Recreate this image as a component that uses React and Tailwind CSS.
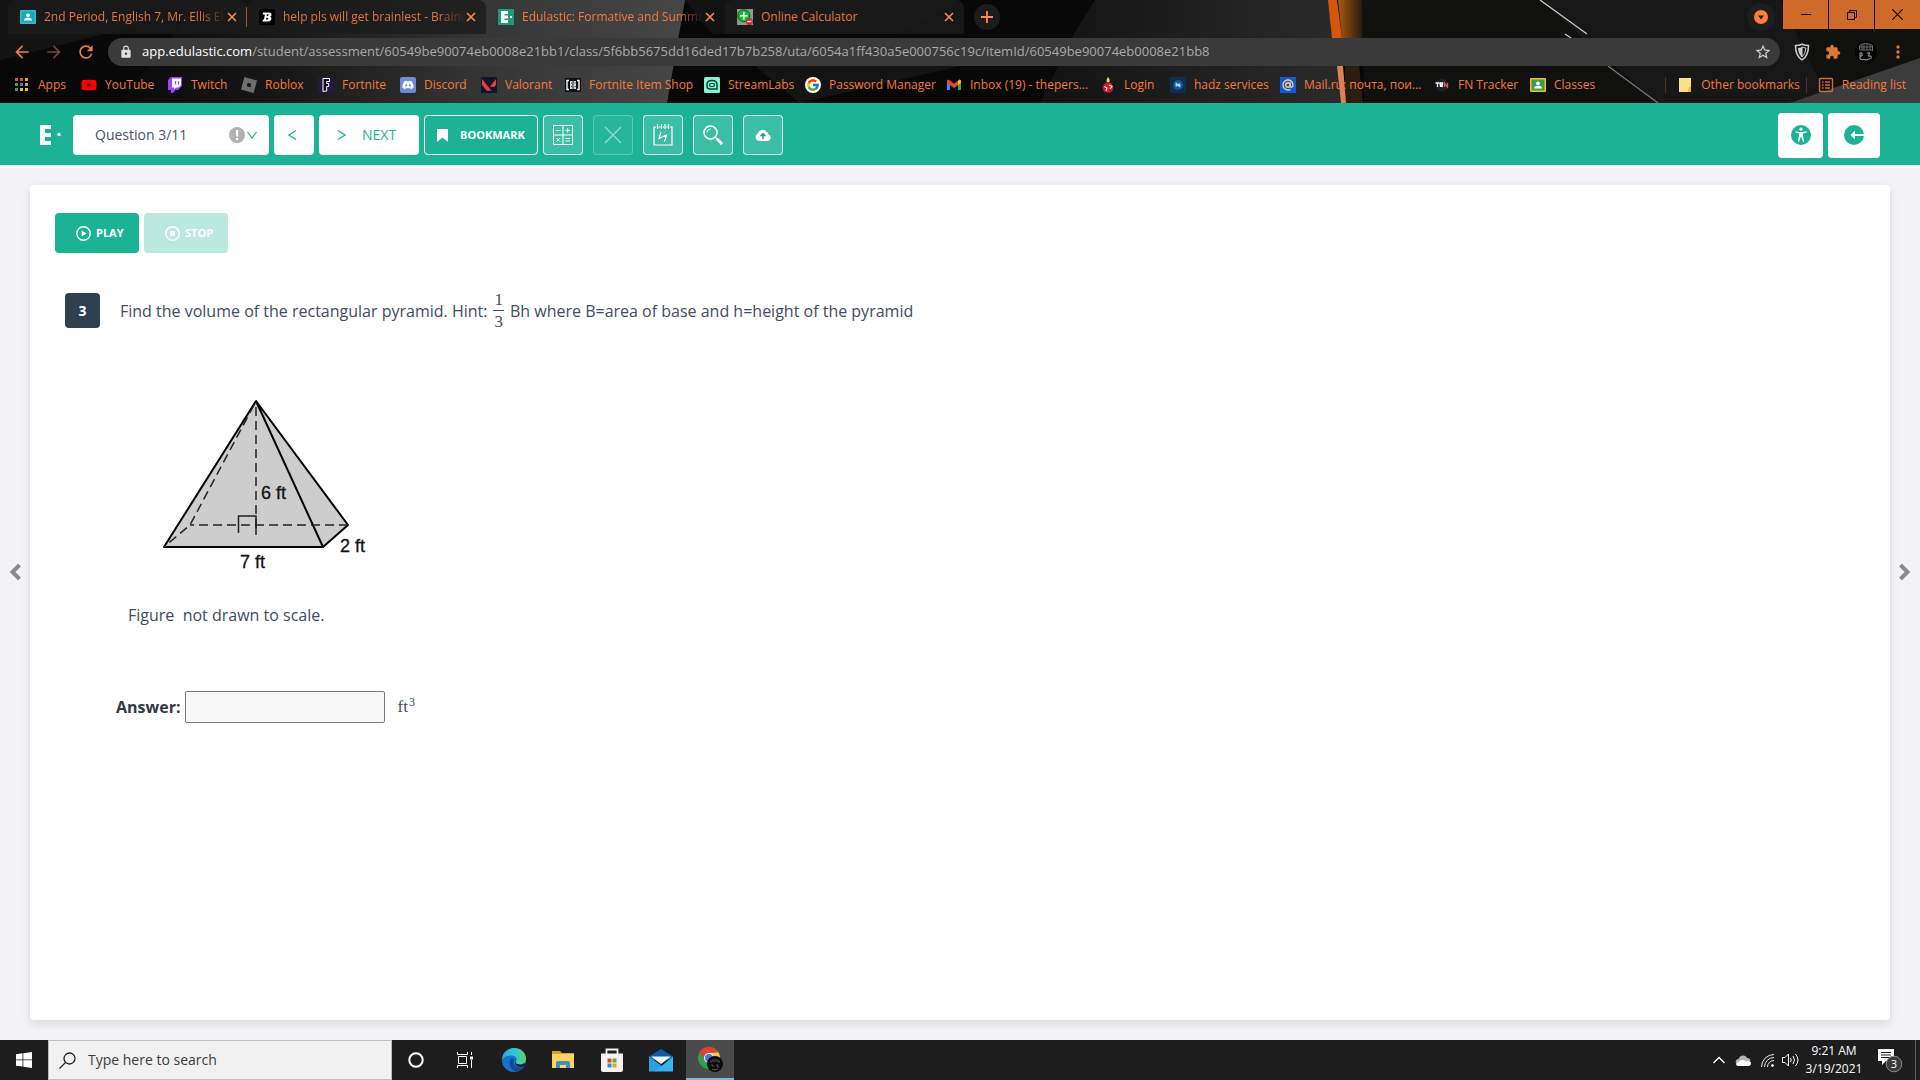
import React from "react";
import { SiValorant, SiRoblox } from "react-icons/si";
import { FaYoutube, FaDiscord } from "react-icons/fa";
import { FcGoogle } from "react-icons/fc";
import { MdLock, MdExtension, MdArrowBack, MdArrowForward, MdRefresh, MdStarBorder, MdMoreVert } from "react-icons/md";

/* ---------- favicons ---------- */

const Sq = ({ children, ...p }) => (
  <svg viewBox="0 0 16 16" className="h-4 w-4 shrink-0" aria-hidden="true" {...p}>
    {children}
  </svg>
);

const ClassroomIcon = ({ bg, frame }) => (
  <Sq>
    <rect y="1" width="16" height="14" rx="1" fill={frame} />
    <rect x="1.5" y="2.5" width="13" height="11" fill={bg} />
    <circle cx="8" cy="6.3" r="1.9" fill="#fff" />
    <path d="M4 11.5c0-2 2-3 4-3s4 1 4 3z" fill="#fff" />
  </Sq>
);

const BrainlyIcon = () => (
  <Sq>
    <rect width="16" height="16" rx="2" fill="#000" />
    <path d="M4 3.500h5.500c2 0 3 .8 3 2.200 0 1-.6 1.700-1.500 2 1 .3 1.600 1 1.400 2-.3 1.800-1.500 2.800-3.800 2.800H3.500l.4-2H5l.8-5H3.700zM8 5.300l-.3 1.600h1c1.300 0 1.400-1.600.3-1.600zM7.300 8.700 7 10.600h1.200c1.400 0 1.500-1.900.2-1.900z" fill="#fff" fillRule="evenodd" />
  </Sq>
);

const EdulasticIcon = () => (
  <Sq>
    <rect width="16" height="16" fill="#1f9a78" />
    <path d="M3 2h7v3H6.500v1.500H10v3H6.500V11H10v3H3z" fill="#fff" />
    <rect x="12" y="7" width="2" height="2" fill="#fff" />
  </Sq>
);

const CalculatorSiteIcon = () => (
  <Sq>
    <rect width="16" height="16" fill="#8f9690" />
    <circle cx="6.800" cy="6.800" r="6" fill="#11c02c" stroke="#0a5e18" strokeWidth="1" />
    <path d="M6.800 3v7.600M3 6.800h7.600" stroke="#fff" strokeWidth="1.500" />
    <circle cx="12.300" cy="12.500" r="3.500" fill="#d3202e" />
    <path d="M10.200 12.500h4.200" stroke="#fff" strokeWidth="1.500" />
  </Sq>
);

const APP_DOTS = ["#e0503f", "#e0503f", "#e0a13f", "#3f9d58", "#4384d8", "#e0a13f", "#3f9d58", "#e8b93a", "#e8b93a"];
const AppsIcon = () => (
  <Sq>
    {APP_DOTS.map((c, i) => (
      <rect key={i} x={1 + (i % 3) * 5} y={1 + Math.floor(i / 3) * 5} width="3" height="3" fill={c} />
    ))}
  </Sq>
);

const YoutubeMark = () => <FaYoutube className="h-4 w-4 shrink-0 text-[#f00]" />;
const TwitchMark = () => (
  <Sq>
    <path d="M4 0h11v9l-4 4H8.500L6 16H4v-3H1V3z" fill="#9147ff" />
    <path d="M5 1.500h9V8l-2.500 2.500H9L7 12.300v-1.800H5z" fill="#fff" />
    <path d="M8.500 4v3.500M11.500 4v3.500" stroke="#9147ff" strokeWidth="1.300" />
  </Sq>
);
const RobloxMark = () => <SiRoblox className="h-4 w-4 shrink-0 text-[#6e6e6e]" />;
const FortniteMark = () => (
  <Sq>
    <rect width="16" height="16" fill="#241a3f" />
    <path d="M5 1.500h6.500v3H8.700V6.500h2v3h-2V14L5 14.500z" fill="#15102a" stroke="#fff" strokeWidth="1" />
  </Sq>
);
const DiscordMark = () => (
  <span className="flex h-4 w-4 shrink-0 items-center justify-center rounded-xs bg-[#7289da]">
    <FaDiscord className="h-3 w-3 text-white" />
  </span>
);
const ValorantMark = () => (
  <span className="flex h-4 w-4 shrink-0 items-center justify-center bg-[#101823]">
    <SiValorant className="h-[14px] w-[14px] text-[#f0384a]" />
  </span>
);
const ItemShopMark = () => (
  <Sq>
    <rect y="1" width="16" height="14" fill="#0d1119" />
    <path d="M4 3.500H2v9h2M12 3.500h2v9h-2" fill="none" stroke="#fff" strokeWidth="1.400" />
    <rect x="5" y="4" width="6" height="8" fill="#d9d9d9" />
    <path d="M8 4v8M6 6h1M9.500 6h1M6 9.500h1M9.500 9.500h1" stroke="#222" strokeWidth="1" />
  </Sq>
);
const StreamlabsMark = () => (
  <Sq>
    <rect width="16" height="16" rx="1.500" fill="#80f5d2" />
    <path d="M3 9V7.500C3 5 5 3.500 8 3.500s5 1.500 5 4.200V12H6c-2 0-3-1-3-3z" fill="none" stroke="#17403a" strokeWidth="1.500" />
    <rect x="5.500" y="6.500" width="5" height="3" rx="1.500" fill="none" stroke="#17403a" strokeWidth="1.200" />
  </Sq>
);
const GoogleMark = () => (
  <span className="flex h-4 w-4 shrink-0 items-center justify-center rounded-full bg-white">
    <FcGoogle className="h-[14px] w-[14px]" />
  </span>
);
const GmailMark = () => (
  <Sq>
    <path d="M1 3.500V13h3V6z" fill="#4285f4" />
    <path d="M15 3.500V13h-3V6z" fill="#34a853" />
    <path d="M1 3.500 2.500 2.600 8 6.800l5.500-4.200 1.500.9V6L8 11 1 6z" fill="#ea4335" />
    <path d="M12 4l1.500-1.400L15 3.500V6l-3 2z" fill="#fbbc04" />
  </Sq>
);
const LoginMark = () => (
  <Sq>
    <path d="M8 0c2.500 3 2 5 0 6-2-1-2-3 0-6z" fill="#f2d36a" />
    <circle cx="8" cy="10.500" r="5.300" fill="#c9172b" />
    <path d="M4.500 9.500 7 11l-1 3M9 8l3 1.500-2 2.500" stroke="#fff" strokeWidth="1.100" fill="none" />
  </Sq>
);
const HadzMark = () => (
  <Sq>
    <rect width="16" height="16" fill="#0b2e52" />
    <circle cx="8" cy="8" r="5" fill="#12559a" />
    <path d="M6.500 9.500V7l3 2V6.500" stroke="#9fe0ff" strokeWidth="1.800" fill="none" />
  </Sq>
);
const MailRuMark = () => (
  <Sq>
    <rect width="16" height="16" fill="#1258d8" />
    <circle cx="8" cy="8" r="2.300" fill="none" stroke="#f3c77f" strokeWidth="1.400" />
    <path d="M10.300 5.500V9c0 2 2.700 1.500 2.700-1A5 5 0 1 0 10.500 12.300" fill="none" stroke="#f3c77f" strokeWidth="1.400" />
  </Sq>
);
const TrackerMark = () => (
  <Sq>
    <circle cx="8" cy="8" r="6.500" fill="#1b2029" />
    <path d="M1.500 6h4M3.500 6v4M6.500 10V6h2v2h-2l2 2" stroke="#fff" strokeWidth="1.300" fill="none" />
    <path d="M10.500 10V6l3 4V6" stroke="#e0584f" strokeWidth="1.300" fill="none" />
  </Sq>
);
const FolderMark = () => (
  <Sq>
    <path d="M2 1h12v10l-1 4H2z" fill="#fbe08b" />
    <path d="M12 10h2v5h-3z" fill="#e9b44c" />
  </Sq>
);
const ReadingListMark = () => (
  <Sq fill="none" stroke="#cf6a35" strokeWidth="1.400">
    <rect x="1.500" y="1.500" width="13" height="13" rx="1" />
    <path d="M4 5h1.500M7 5h5M4 8h1.500M7 8h5M4 11h1.500M7 11h5" />
  </Sq>
);

/* ---------- browser chrome ---------- */

const TABS = [
  { title: "2nd Period, English 7, Mr. Ellis Ell", icon: <ClassroomIcon bg="#1aa7b8" frame="#31bccd" />, fade: true },
  { title: "help pls will get brainlest - Brainl", icon: <BrainlyIcon />, fade: true },
  { title: "Edulastic: Formative and Summa", icon: <EdulasticIcon />, active: true, fade: true },
  { title: "Online Calculator", icon: <CalculatorSiteIcon /> },
];

const BOOKMARKS = [
  { label: "Apps", icon: <AppsIcon />, w: "w-[67px]" },
  { label: "YouTube", icon: <YoutubeMark />, w: "w-[86px]" },
  { label: "Twitch", icon: <TwitchMark />, w: "w-[74px]" },
  { label: "Roblox", icon: <RobloxMark />, w: "w-[77px]" },
  { label: "Fortnite", icon: <FortniteMark />, w: "w-[82px]" },
  { label: "Discord", icon: <DiscordMark />, w: "w-[81px]" },
  { label: "Valorant", icon: <ValorantMark />, w: "w-[84px]" },
  { label: "Fortnite Item Shop", icon: <ItemShopMark />, w: "w-[139px]" },
  { label: "StreamLabs", icon: <StreamlabsMark />, w: "w-[101px]" },
  { label: "Password Manager", icon: <GoogleMark />, w: "w-[141px]" },
  { label: "Inbox (19) - thepers...", icon: <GmailMark />, w: "w-[154px]" },
  { label: "Login", icon: <LoginMark />, w: "w-[70px]" },
  { label: "hadz services", icon: <HadzMark />, w: "w-[110px]" },
  { label: "Mail.ru: почта, пои...", icon: <MailRuMark />, w: "w-[154px]" },
  { label: "FN Tracker", icon: <TrackerMark />, w: "w-[96px]" },
  { label: "Classes", icon: <ClassroomIcon bg="#3f9a52" frame="#f4bc2c" />, w: "w-[66px]" },
];

function ThemeArt() {
  return (
    <svg className="absolute inset-0 h-full w-full" viewBox="0 0 1920 103" preserveAspectRatio="none" aria-hidden="true">
      <defs>
        <linearGradient id="slab" x1="0" x2="1">
          <stop offset="0" stopColor="#0a0a0a" />
          <stop offset="0.3" stopColor="#181818" />
          <stop offset="0.65" stopColor="#363636" />
          <stop offset="1" stopColor="#464646" />
        </linearGradient>
        <linearGradient id="panel" x1="0" x2="1">
          <stop offset="0" stopColor="#121212" />
          <stop offset="1" stopColor="#2b2b2b" />
        </linearGradient>
        <linearGradient id="glow" x1="0" x2="1">
          <stop offset="0" stopColor="#a65b12" />
          <stop offset="1" stopColor="#12110e" />
        </linearGradient>
      </defs>
      <rect width="1920" height="103" fill="#080808" />
      <path d="M200 0H685L667 103H120z" fill="url(#slab)" />
      <path d="M0 60 240 0H0z" fill="#1a1a1a" opacity=".6" />
      <path d="M685 0H960L900 34H712z" fill="#121212" />
      <path d="M755 66H960L800 103z" fill="#141414" />
      <path d="M1095 0H1330L1345 103H1040L1074 34z" fill="url(#panel)" />
      <path d="M1338 0h24L1366 38h-24z" fill="url(#glow)" />
      <path d="M1345 66h14l4 37h-18z" fill="#2b1d10" />
      <path d="M1362 0H1920V103H1364z" fill="#10100f" />
      <path d="M1540 0H1780L1830 103H1657z" fill="#171717" />
      <path d="M1328 0h9l5 38h-10z" fill="#d4570c" />
      <path d="M1337 66h6l3 37h-5z" fill="#dc8158" />
      <path d="M1540 0 1587 34M1565 34l6 4" stroke="#c9c9c9" strokeWidth="1.300" />
      <path d="M1608 66 1658 103" stroke="#777" strokeWidth="1.300" />
      <path d="M1920 58 1790 103h130z" fill="#3c3c3c" />
    </svg>
  );
}

const CloseX = ({ className }) => (
  <svg viewBox="0 0 10 10" className={className} fill="none" stroke="currentColor" strokeWidth="1.600" aria-hidden="true">
    <path d="M1 1l8 8M9 1 1 9" />
  </svg>
);

function Browser() {
  return (
    <header className="relative bg-[#0a0a0a] text-xs text-[#f57a3d] select-none">
      <ThemeArt />
      <div className="relative flex h-[38px] items-start">
        <nav className="flex h-[34px] items-center pl-2" aria-label="Tabs">
          {TABS.map((t, i) => (
            <div
              key={t.title}
              className={
                "flex h-[34px] w-[239px] items-center rounded-t-lg pl-3 " +
                (t.active ? "text-[#f57a3d]" : "bg-[#1c1c1c]/80 text-[#e27540]")
              }
            >
              {t.icon}
              <span
                className={
                  "ml-2 w-[180px] shrink-0 whitespace-nowrap " +
                  (t.fade ? "[mask-image:linear-gradient(to_right,black_155px,transparent_182px)]" : "")
                }
              >
                {t.title}
              </span>
              <button className="flex h-4 w-4 shrink-0 items-center justify-center text-[#ff8a4c]" aria-label="Close tab">
                <CloseX className="h-[10px] w-[10px]" />
              </button>
              {i === 0 && <span className="ml-1.5 h-5 w-px shrink-0 bg-[#9a5530]" />}
            </div>
          ))}
        </nav>
        <button className="mt-1 ml-[10px] flex h-[26px] w-[26px] items-center justify-center rounded-full bg-[#1c1c1c] text-[#ff8a4c]" aria-label="New tab">
          <svg viewBox="0 0 12 12" className="h-3 w-3" stroke="currentColor" strokeWidth="1.800"><path d="M6 0v12M0 6h12" /></svg>
        </button>
        <div className="ml-auto flex items-start">
          <button className="mt-[3px] mr-2 flex h-7 w-7 items-center justify-center rounded-full bg-[#1e1e1e]" aria-label="Search tabs">
            <svg viewBox="0 0 14 14" className="h-[14px] w-[14px]"><circle cx="7" cy="7" r="7" fill="#ff7b3a" /><path d="M4 5.500h6L7 9.500z" fill="#1a1a1a" /></svg>
          </button>
          <div className="flex gap-px text-black">
            <button className="flex h-[29px] w-[45px] items-center justify-center bg-[#cf6a2b]" aria-label="Minimize">
              <svg viewBox="0 0 10 10" className="h-[10px] w-[10px]" stroke="currentColor"><path d="M0 4.500h10" /></svg>
            </button>
            <button className="flex h-[29px] w-[45px] items-center justify-center bg-[#cf6a2b]" aria-label="Restore">
              <svg viewBox="0 0 10 10" className="h-[10px] w-[10px]" fill="none" stroke="currentColor"><path d="M.5 2.500h7v7h-7zM2.500 2.500v-2h7v7h-2" /></svg>
            </button>
            <button className="flex h-[29px] w-[45px] items-center justify-center bg-[#cf6a2b]" aria-label="Close">
              <svg viewBox="0 0 10 10" className="h-[11px] w-[11px]" stroke="currentColor"><path d="M0 0l10 10M10 0 0 10" /></svg>
            </button>
          </div>
        </div>
      </div>

      <div className="relative flex h-7 items-center">
        <div className="flex w-[108px] shrink-0 items-center gap-3 pl-3 text-[#e98045]">
          <button aria-label="Back"><MdArrowBack className="h-5 w-5" /></button>
          <button aria-label="Forward" className="text-[#7d4529]"><MdArrowForward className="h-5 w-5" /></button>
          <button aria-label="Reload"><MdRefresh className="h-5 w-5" /></button>
        </div>
        <div className="flex h-7 min-w-0 flex-1 items-center rounded-full bg-[#3a3a3a] pr-2 pl-[11px]">
          <MdLock className="h-[14px] w-[14px] shrink-0 text-[#e0e0e0]" />
          <p className="ml-[9px] flex-1 truncate text-[13px] text-[#a9a9a9]">
            <span className="text-white">app.edulastic.com</span>
            /student/assessment/60549be90074eb0008e21bb1/class/5f6bb5675dd16ded17b7b258/uta/6054a1ff430a5e000756c19c/itemId/60549be90074eb0008e21bb8
          </p>
          <button aria-label="Bookmark this page" className="text-[#d0d0d0]"><MdStarBorder className="h-[18px] w-[18px]" /></button>
        </div>
        <div className="flex w-[140px] shrink-0 items-center">
          <button aria-label="Shield extension" className="ml-3.5">
            <svg viewBox="0 0 16 18" className="h-[18px] w-4" fill="none" stroke="#cfcfcf"><path d="M1.500 2.500Q5 2.500 8 1.200q3 1.300 6.500 1.300Q14.500 13 8 16.800 1.500 13 1.500 2.500z" strokeWidth="1.500" /><path d="M8 4q2 1 4 1-.5 6.500-4 9z" strokeWidth="1" /><path d="M8 4q-2 1-4 1 .5 6.500 4 9z" fill="#cfcfcf" stroke="none" /></svg>
          </button>
          <button aria-label="Extensions" className="ml-[15px] text-[#de7636]"><MdExtension className="h-4 w-4" /></button>
          <button aria-label="Profile" className="ml-[14px]">
            <svg viewBox="0 0 22 22" className="h-[22px] w-[22px]"><circle cx="11" cy="11" r="11" fill="#050505" /><path d="M4.500 9V4.500q6-4 13 0V10M7 3v6M9 2.500V9M12 2.500V9M15 3v6M5 9h13M5 6h12" stroke="#6a6a6a" fill="none" /><path d="M5 12h2v3H5zM12 12h3l-2 3h3v3M8 18.500l3 .5 4-1.500M5 15v3l3 1" stroke="#a5a5a5" fill="none" /></svg>
          </button>
          <button aria-label="Menu" className="ml-[11px] text-[#de7636]"><MdMoreVert className="h-5 w-5" /></button>
        </div>
      </div>

      <div className="relative flex h-[37px] items-center pr-[14px] pl-[14px]">
        <ul className="flex min-w-0 flex-1 overflow-hidden">
          {BOOKMARKS.map((b) => (
            <li key={b.label} className={"shrink-0 " + b.w}>
              <a href="#" className="flex items-center gap-2 whitespace-nowrap">
                {b.icon}
                {b.label}
              </a>
            </li>
          ))}
        </ul>
        <a href="#" className="flex items-center gap-2 border-l border-[#4a3226] pr-1.5 pl-[11px] whitespace-nowrap"><FolderMark />Other bookmarks</a>
        <a href="#" className="flex items-center gap-2 border-l border-[#4a3226] pl-[11px] whitespace-nowrap"><ReadingListMark />Reading list</a>
      </div>
    </header>
  );
}

/* ---------- assessment toolbar ---------- */

const Chevron = ({ dir, className }) => (
  <svg viewBox="0 0 10 12" className={className} fill="none" stroke="currentColor" strokeWidth="1.400" aria-hidden="true">
    <path d={dir === "left" ? "M9 1 1 6l8 5" : "M1 1l8 5-8 5"} />
  </svg>
);

const toolBtn = "flex h-10 w-10 items-center justify-center rounded border border-white/80 bg-white/15 text-white";

function Toolbar() {
  return (
    <div className="flex h-[62px] shrink-0 items-center bg-[#1bb394] pt-0.5 pr-10 pl-10 text-[#1bb394]">
      <svg viewBox="0 0 21 20" className="mr-3 h-5 w-[21px] shrink-0" fill="#fff" role="img" aria-label="Edulastic">
        <path d="M0 0h11v4H5v4h6v4H5v4h6v4H0z" /><circle cx="19" cy="9.500" r="1.700" />
      </svg>
      <div className="relative w-[196px]">
        <select aria-label="Question" className="h-10 w-full appearance-none rounded bg-white pl-[22px] text-sm font-medium text-[#4b5262]">
          <option>Question 3/11</option>
        </select>
        <span className="pointer-events-none absolute inset-y-0 right-3 flex items-center gap-0.5">
          <svg viewBox="0 0 16 16" className="h-4 w-4"><circle cx="8" cy="8" r="8" fill="#b1b1b1" /><path d="M7 3h2.200L9 9.500H7.200z" fill="#fff" /><circle cx="8.100" cy="12" r="1.200" fill="#fff" /></svg>
          <svg viewBox="0 0 10 8" className="h-2 w-[10px]" fill="none" stroke="#1bb394" strokeWidth="1.200"><path d="M.5 1 5 7l4.500-6" /></svg>
        </span>
      </div>
      <button aria-label="Previous" className="ml-[5px] flex h-10 w-10 items-center justify-center rounded bg-white pr-1"><Chevron dir="left" className="h-3 w-[9px]" /></button>
      <button className="ml-[5px] flex h-10 w-[100px] items-center gap-4 rounded bg-white pl-[18px] text-sm"><Chevron dir="right" className="h-3 w-[9px]" />NEXT</button>
      <button className="ml-[5px] flex h-10 w-[114px] items-center gap-3 rounded border border-white pl-3 text-[11px] font-bold text-white">
        <svg viewBox="0 0 11 13" className="h-[13px] w-[11px]" fill="#fff"><path d="M0 0h11v13L5.500 8.500 0 13z" /></svg>
        BOOKMARK
      </button>
      <div className="ml-[5px] flex gap-2.5">
        <button className={toolBtn} aria-label="Calculator">
          <svg viewBox="0 0 20 20" className="h-5 w-5" fill="none" stroke="currentColor"><path d="M.5.5h19v19H.5zM10 .5v19M.5 10h19M3 5.500h4.500M12.500 5.500H17M14.700 3.200v4.600M3.500 13l3.500 3.500M7 13l-3.500 3.500M12.500 13.500H17M12.500 16H17" /></svg>
        </button>
        <button disabled className="flex h-10 w-10 items-center justify-center rounded border border-white/25 bg-white/5 text-white/50" aria-label="Cross out">
          <CloseX className="h-5 w-5 [stroke-width:0.7]" />
        </button>
        <button className={toolBtn} aria-label="Scratchpad">
          <svg viewBox="0 0 20 22" className="h-[22px] w-5" fill="none" stroke="currentColor" strokeWidth="1.200"><path d="M3 3H1v18h18V3h-2M4.500 0v5M8.500 0v5M12 0v5M15.500 0v5M5.500 3h2M9.500 3h1.500M13 3h1.500M8 8 6 14.500 13.500 11l-2 6.500" /></svg>
        </button>
        <button className={toolBtn} aria-label="Magnify">
          <svg viewBox="0 0 20 20" className="h-5 w-5" fill="none" stroke="currentColor"><circle cx="7.500" cy="7.500" r="6.500" strokeWidth="1.500" /><path d="M4 7.500A3.500 3.500 0 0 1 7.500 4" /><path d="M12 12l2.500 2.500" strokeWidth="1.500" /><path d="M14 14l5 5" strokeWidth="3" /></svg>
        </button>
        <button className={toolBtn} aria-label="Upload">
          <svg viewBox="0 0 16 12" className="h-3 w-4"><path d="M4 12a4 4 0 0 1-1.300-7.500A5 5 0 0 1 11.500 2.800a3.300 3.300 0 0 1 2 2.800A3.300 3.300 0 0 1 12.800 12z" fill="#fff" /><path d="M8 10V6M5.500 7.200 8 4.700l2.500 2.500" fill="none" stroke="#1b9f85" strokeWidth="1.600" /></svg>
        </button>
      </div>
      <button aria-label="Accessibility" className="ml-auto flex h-[45px] w-[45px] items-center justify-center rounded bg-white">
        <svg viewBox="0 0 20 20" className="h-5 w-5"><circle cx="10" cy="10" r="10" fill="#1bb394" /><circle cx="10" cy="4.200" r="1.600" fill="#fff" /><path d="M4.500 6.300 8.500 7h3l4-.7.200 1.200-3.700 1v2.500l1.300 5.500-1.300.4L10.300 12h-.6L8 16.900l-1.300-.4L8 11V8.500l-3.700-1z" fill="#fff" /></svg>
      </button>
      <button aria-label="Exit" className="ml-[5px] flex h-[45px] w-[52px] items-center justify-center rounded bg-white">
        <svg viewBox="0 0 20 20" className="h-5 w-5"><circle cx="10" cy="10" r="10" fill="#1bb394" /><path d="M6.500 10 11 5.500V9h9v2h-9v3.500z" fill="#fff" /></svg>
      </button>
    </div>
  );
}

/* ---------- question ---------- */

function Pyramid() {
  return (
    <svg viewBox="0 0 212 180" className="h-[180px] w-[212px]" role="img" aria-label="Rectangular pyramid, 7 ft by 2 ft base, 6 ft high">
      <path d="M96 6 4 152h159l25-22z" fill="#cdcdcd" />
      <g fill="none" stroke="#000" strokeWidth="2" strokeLinejoin="round">
        <path d="M96 6 4 152h159l25-22zM96 6l67 146" />
      </g>
      <g fill="none" stroke="#222" strokeWidth="1.500" strokeDasharray="9 5">
        <path d="M96 12v128" />
        <path d="M188 130H30" />
        <path d="M94 10 30 130 4 152" />
      </g>
      <path d="M78.500 138v-17H96v17" fill="none" stroke="#222" strokeWidth="1.500" />
      <g className="[font-family:'Liberation_Sans',Arial,sans-serif] text-[18px]" fill="#111" stroke="#111" strokeWidth="0.300">
        <text x="101" y="104">6 ft</text>
        <text x="80" y="173">7 ft</text>
        <text x="180" y="157">2 ft</text>
      </g>
    </svg>
  );
}

const serif = "[font-family:'Liberation_Serif','Times_New_Roman',serif]";

function Question() {
  return (
    <main className="flex flex-1 items-stretch bg-[#f3f3f8] py-5 text-base text-[#434b5d]">
      <button aria-label="Previous question" className="flex w-[30px] shrink-0 items-center justify-center text-[#8c8c8c]">
        <svg viewBox="0 0 12 18" className="-mt-[62px] h-[18px] w-3" fill="none" stroke="currentColor" strokeWidth="4"><path d="M10.500 2 3.500 9l7 7" /></svg>
      </button>
      <section className="flex-1 rounded bg-white pt-7 pl-[25px] shadow-[0_3px_10px_rgba(0,0,0,0.12)]">
        <div className="flex gap-[5px] text-[11px] font-bold text-white">
          <button className="flex h-10 w-[84px] items-center gap-[5px] rounded bg-[#1bb394] pl-[21px]">
            <svg viewBox="0 0 15 15" className="h-[15px] w-[15px]"><circle cx="7.500" cy="7.500" r="6.700" fill="none" stroke="#fff" strokeWidth="1.400" /><path d="M5.700 4.500v6l4.800-3z" fill="#fff" /></svg>
            PLAY
          </button>
          <button disabled className="flex h-10 w-[84px] items-center gap-[5px] rounded bg-[#bbe8df] pl-[21px]">
            <svg viewBox="0 0 15 15" className="h-[15px] w-[15px]"><circle cx="7.500" cy="7.500" r="6.700" fill="none" stroke="#fff" strokeWidth="1.400" /><rect x="5" y="5" width="5" height="5" rx="1" fill="#fff" /></svg>
            STOP
          </button>
        </div>
        <div className="mt-[38px] flex items-center pl-2.5">
          <span className="mr-5 flex h-[35px] w-[35px] items-center justify-center rounded bg-[#2f4151] text-sm font-bold text-white">3</span>
          <p className="flex items-center">
            Find the volume of the rectangular pyramid. Hint:
            <span className={"mx-1.5 flex flex-col text-center text-[17px] leading-[17px] " + serif}>
              <span className="border-b border-[#434b5d] px-px pb-0.5">1</span>
              <span className="px-px pt-0.5">3</span>
            </span>
            Bh where B=area of base and h=height of the pyramid
          </p>
        </div>
        <div className="mt-[65px] pl-[105px]"><Pyramid /></div>
        <p className="mt-7 pl-[73px] leading-6 whitespace-pre">Figure  not drawn to scale.</p>
        <div className="mt-16 flex items-center pl-[61px]">
          <label htmlFor="answer" className="font-bold text-[#2f3a4a]">Answer:</label>
          <input id="answer" type="text" className="ml-[5px] h-8 w-[200px] rounded-xs border border-[#7b7b7b] bg-[#f8f8f8] px-2" />
          <span className={"ml-3 text-[17px] leading-6 " + serif}>ft<sup className="ml-px text-xs">3</sup></span>
        </div>
      </section>
      <button aria-label="Next question" className="flex w-[30px] shrink-0 items-center justify-center text-[#8c8c8c]">
        <svg viewBox="0 0 12 18" className="-mt-[62px] h-[18px] w-3" fill="none" stroke="currentColor" strokeWidth="4"><path d="M1.500 2l7 7-7 7" /></svg>
      </button>
    </main>
  );
}

/* ---------- taskbar ---------- */

const appBtn = "flex h-10 w-12 items-center justify-center";

function Taskbar() {
  return (
    <footer className="flex h-10 shrink-0 items-center bg-[#1d1d1d] text-xs text-white select-none">
      <button className={appBtn} aria-label="Start">
        <svg viewBox="0 0 16 16" className="h-4 w-4" fill="#fff"><path d="M0 2.200 6.500 1.300v6.200H0zM7.300 1.200 16 0v7.500H7.300zM0 8.300h6.500v6.300L0 13.700zM7.300 8.300H16V16l-8.700-1.200z" /></svg>
      </button>
      <label className="flex h-10 w-[344px] items-center border border-[#bdbdbd] bg-[#f1f1f1] pl-[10px]">
        <svg viewBox="0 0 17 17" className="h-[17px] w-[17px] shrink-0" fill="none" stroke="#222" strokeWidth="1.300"><circle cx="10.500" cy="6.500" r="5.500" /><path d="M6.500 10.500.5 16.500" /></svg>
        <input type="text" aria-label="Search" placeholder="Type here to search" className="ml-3 min-w-0 flex-1 bg-transparent text-sm outline-none placeholder:text-[#3c3c3c]" />
      </label>
      <div className="flex gap-px">
        <button className={appBtn} aria-label="Cortana"><svg viewBox="0 0 16 16" className="h-4 w-4"><circle cx="8" cy="8" r="6.700" fill="none" stroke="#fff" strokeWidth="2" /></svg></button>
        <button className={appBtn} aria-label="Task view">
          <svg viewBox="0 0 16 16" className="h-4 w-4" fill="none" stroke="#fff"><path d="M.5 0v2.500h10V0M.5 16v-2.500h10V16M1.500 4.500h8v7h-8zM14.500 0v3M14.500 8v8" /><path d="M13 4.500h3v3h-3z" fill="#fff" stroke="none" /></svg>
        </button>
        <button className={appBtn} aria-label="Edge">
          <svg viewBox="0 0 24 24" className="h-6 w-6">
            <defs><linearGradient id="edgeTop" x1="0" x2="1"><stop offset="0" stopColor="#2aa7e6" /><stop offset=".6" stopColor="#37c6d0" /><stop offset="1" stopColor="#5fd94f" /></linearGradient></defs>
            <circle cx="12" cy="12" r="12" fill="#1674c8" />
            <path d="M0 11.500C.5 5 5.500 0 12 0c7 0 12 5 12 10.500 0 3.700-2.500 6-6 6-2.500 0-4.300-1-4.300-2 0-.8 1-1.200 1-3C14.700 9 12 7.500 9 7.500c-4 0-7.500 1.500-9 4z" fill="url(#edgeTop)" />
            <path d="M9 10.500c-3.500 5 0 12 5.500 13.200C18 23 21 21 22.300 18c-2 1.300-4.500 1.500-6.800 1-3.500-1-5-4-3.500-7.500-1-1-2-1.500-3-1z" fill="#11499b" />
            <path d="M13.700 14.500c0 1 1.800 2 4.300 2 1.600 0 3-.4 4-1.200l1.500 1.200-1.200 1.500c-4 2-9.300.5-9.300-4z" fill="#1d1d1d" />
          </svg>
        </button>
        <button className={appBtn} aria-label="File Explorer">
          <svg viewBox="0 0 22 20" className="h-5 w-[22px]"><path d="M0 1h8l2 2h12v15H0z" fill="#d9a21b" /><path d="M0 4h22v14H0z" fill="#fcd462" /><path d="M4 18v-5q0-2 2-2h10q2 0 2 2v5h-4v-3H8v3z" fill="#3f8fc4" /></svg>
        </button>
        <button className={appBtn} aria-label="Microsoft Store">
          <svg viewBox="0 0 24 24" className="h-6 w-6"><path d="M6.500 6V1.500h11V6" fill="none" stroke="#f2f2f2" strokeWidth="1.800" /><path d="M1 5.500h22V22q0 2-2 2H3q-2 0-2-2z" fill="#f2f2f2" /><path d="M7.500 10.500h4v4h-4z" fill="#d8492b" /><path d="M12.500 10.500h4v4h-4z" fill="#6fa82e" /><path d="M7.500 15.500h4v4h-4z" fill="#2f8fd0" /><path d="M12.500 15.500h4v4h-4z" fill="#e3aa1e" /></svg>
        </button>
        <button className={appBtn} aria-label="Mail">
          <svg viewBox="0 0 24 24" className="h-6 w-6"><path d="M12 1 24 8.500V12H0V8.500z" fill="#0f5ba8" /><path d="M2 8.500h20L12 16z" fill="#eef4fa" /><path d="M0 8.500 13 18l-6 5.500H0z" fill="#2a9fe4" /><path d="M24 8.500 6 23.500h18z" fill="#35b4f0" /></svg>
        </button>
        <button className="flex h-10 w-12 items-center justify-center border-b-2 border-[#76b9ed] bg-[#4b4b4b]" aria-label="Chrome">
          <svg viewBox="0 0 26 26" className="h-[26px] w-[26px]">
            <circle cx="12" cy="12" r="11" fill="#2f9e4f" />
            <path d="M2.500 6.500A11 11 0 0 1 21.500 6.500L12 7 8 14z" fill="#df4032" />
            <path d="M21.500 6.500A11 11 0 0 1 12 23l4.500-9L12 7z" fill="#f7ca3a" />
            <circle cx="12" cy="12" r="5" fill="#fff" /><circle cx="12" cy="12" r="4" fill="#3c78e0" />
            <circle cx="18" cy="18" r="8" fill="#0b0b0b" /><path d="M14 17v-3M16 16v-3M18 16v-3M20 16v-3M22 17v-3M14 19h2v2M19 19h2l-1 2h2M15 23l3 1 3-1" stroke="#6a6a6a" strokeWidth=".8" fill="none" />
          </svg>
        </button>
      </div>
      <div className="ml-auto flex items-center">
        <button aria-label="Show hidden icons"><svg viewBox="0 0 12 8" className="h-2 w-3" fill="none" stroke="#fff" strokeWidth="1.300"><path d="M.5 7 6 1.500 11.500 7" /></svg></button>
        <svg viewBox="0 0 16 11" className="ml-2.5 h-[11px] w-4"><path d="M1 8.500C0 5 2 3.800 3.500 4 5-.5 11-.5 12 3c2 0 3.500 1 3.500 3z" fill="#b5b5b5" /><path d="M3 11c-2.500 0-2.500-3.500.5-3.700C5 4.500 9 4.500 10.500 6.500c4-1 5.500 0 5.500 2 0 1.500-1 2.500-2.500 2.500z" fill="#fff" /></svg>
        <svg viewBox="0 0 13 13" className="ml-2.5 h-[13px] w-[13px]" fill="none" stroke="#e8e8e8"><path d="M.5 13A12.500 12.500 0 0 1 13 .5M3.500 13A9.500 9.500 0 0 1 13 3.500M6.500 13A6.500 6.500 0 0 1 13 6.500" /><circle cx="11.500" cy="11.500" r="1" fill="#fff" /></svg>
        <svg viewBox="0 0 17 14" className="ml-2 h-[14px] w-[17px]" fill="none" stroke="#fff"><path d="M.5 4.500h2.500L6.500 1v12L3 9.500H.5zM8.500 5q1.500 2 0 4M11 3q3 4 0 8M13.500 1q5 6 0 12" /></svg>
        <div className="w-[70px] text-center leading-[18px]"><div>9:21 AM</div><div>3/19/2021</div></div>
        <button aria-label="Notifications" className="mr-3 ml-2">
          <svg viewBox="0 0 26 26" className="h-[26px] w-[26px]"><path d="M1 2h16v12H9l-4 4v-4H1z" fill="#fff" /><path d="M4 5.500h10M4 8h10M4 10.500h10" stroke="#1d1d1d" /><circle cx="17" cy="17" r="7.800" fill="#3a3a3a" stroke="#8a8a8a" /><text x="17" y="21" textAnchor="middle" fill="#fff" className="text-[11px]">3</text></svg>
        </button>
        <span className="mr-1 h-10 w-px bg-[#5a5a5a]" />
      </div>
    </footer>
  );
}

export default function App() {
  return (
    <div className="flex min-h-screen flex-col [font-family:'Open_Sans','Noto_Sans',sans-serif]">
      <Browser />
      <Toolbar />
      <Question />
      <Taskbar />
    </div>
  );
}
